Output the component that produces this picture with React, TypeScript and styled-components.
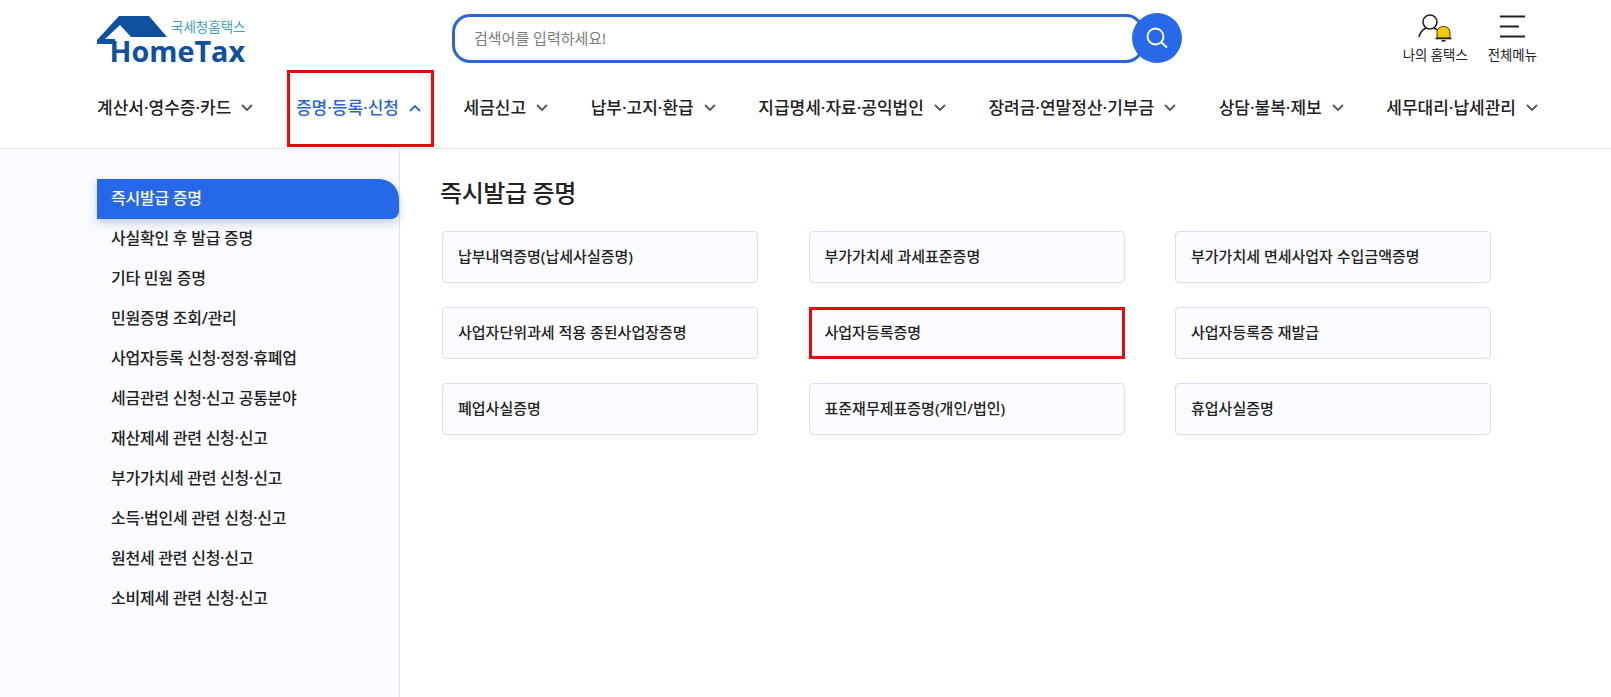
import styled, { createGlobalStyle } from 'styled-components'

const fontStack = `"Noto Sans", "Noto Sans CJK KR", sans-serif`

const GlobalStyle = createGlobalStyle`
  * { box-sizing: border-box; }
  html, body { margin: 0; padding: 0; background: #fff; }
  body {
    font-family: ${fontStack};
    color: #222;
  }
`

const Page = styled.div`
  width: 1611px;
  height: 697px;
  display: flex;
  flex-direction: column;
  overflow: hidden;
`

const Header = styled.header`
  height: 149px;
  border-bottom: 1px solid #e8e8e8;
  padding: 0 73px 0 97px;
  flex-shrink: 0;
`

const TopRow = styled.div`
  height: 70px;
  display: flex;
  align-items: flex-start;
`

const LogoBox = styled.a`
  width: 355px;
  padding-top: 16px;
  display: block;
  svg { display: block; overflow: visible; }
`

const SearchWrap = styled.div`
  width: 730px;
  margin-top: 13px;
  display: flex;
  align-items: center;
`

const SearchInput = styled.input`
  flex: 1;
  height: 49px;
  border: 3px solid #2a66d9;
  border-radius: 18px;
  padding: 0 20px 0 19px;
  font: 400 15px ${fontStack};
  color: #333;
  outline: none;
  &::placeholder { color: #7b7b7b; opacity: 1; }
`

const SearchButton = styled.button`
  width: 50px;
  height: 50px;
  margin-left: -12px;
  border: 0;
  border-radius: 50%;
  background: #2869e9;
  display: flex;
  align-items: center;
  justify-content: center;
  position: relative;
  padding: 0;
`

const Utils = styled.div`
  margin-left: auto;
  margin-right: 1px;
  padding-top: 12px;
  display: flex;
  gap: 20px;
`

const UtilItem = styled.a`
  display: flex;
  flex-direction: column;
  align-items: center;
  font-size: 13.4px;
  line-height: 18px;
  color: #222;
  svg { display: block; margin-bottom: 4px; }
`

const Nav = styled.nav`
  height: 78px;
  display: flex;
  justify-content: space-between;
  align-items: center;
`

const NavItem = styled.a<{ $active?: boolean }>`
  position: relative;
  display: flex;
  align-items: center;
  gap: 10px;
  font-size: 17px;
  font-weight: 500;
  line-height: 24px;
  height: 24px;
  margin-top: -2px;
  white-space: nowrap;
  color: ${p => (p.$active ? '#2a66d9' : '#222')};
  svg { color: ${p => (p.$active ? '#2a66d9' : '#555')}; }
`

const Highlight = styled.span<{ $top: number; $right: number; $bottom: number; $left: number }>`
  position: absolute;
  top: ${p => p.$top}px;
  right: ${p => p.$right}px;
  bottom: ${p => p.$bottom}px;
  left: ${p => p.$left}px;
  border: 3px solid #e30b0b;
  pointer-events: none;
`

const Body = styled.div`
  flex: 1;
  display: flex;
  min-height: 0;
`

const Sidebar = styled.aside`
  width: 400px;
  padding: 30px 0 0 97px;
  background: #f9fbff;
  border-right: 1px solid #d9e3f3;
  flex-shrink: 0;
`

const SideList = styled.ul`
  list-style: none;
  margin: 0;
  padding: 0;
`

const SideItem = styled.li<{ $active?: boolean }>`
  height: 40px;
  padding: 0 0 5px 14px;
  display: flex;
  align-items: center;
  font-size: 16px;
  font-weight: 500;
  letter-spacing: -0.25px;
  color: ${p => (p.$active ? '#fff' : '#222')};
  background: ${p => (p.$active ? '#2568e8' : 'transparent')};
  border-radius: ${p => (p.$active ? '0 20px 8px 0' : '0')};
  box-shadow: ${p => (p.$active ? '0 4px 8px rgba(40, 70, 130, 0.25)' : 'none')};
`

const Main = styled.main`
  flex: 1;
  padding: 28px 119px 0 42px;
`

const Title = styled.h2`
  margin: 0 0 22px -2px;
  font-size: 24px;
  font-weight: 500;
  line-height: 32px;
  letter-spacing: -0.4px;
  color: #222;
`

const CardGrid = styled.div`
  display: grid;
  grid-template-columns: repeat(3, 316px);
  column-gap: 50.5px;
  row-gap: 24px;
`

const Card = styled.a`
  position: relative;
  height: 52px;
  padding: 0 15px 4px;
  display: flex;
  align-items: center;
  background: #fbfcff;
  border: 1px solid #d5e0f2;
  border-radius: 4px;
  font-size: 15px;
  font-weight: 500;
  color: #222;
`

const navItems = [
  '계산서·영수증·카드',
  '증명·등록·신청',
  '세금신고',
  '납부·고지·환급',
  '지급명세·자료·공익법인',
  '장려금·연말정산·기부금',
  '상담·불복·제보',
  '세무대리·납세관리',
]

const sideItems = [
  '즉시발급 증명',
  '사실확인 후 발급 증명',
  '기타 민원 증명',
  '민원증명 조회/관리',
  '사업자등록 신청·정정·휴폐업',
  '세금관련 신청·신고 공통분야',
  '재산제세 관련 신청·신고',
  '부가가치세 관련 신청·신고',
  '소득·법인세 관련 신청·신고',
  '원천세 관련 신청·신고',
  '소비제세 관련 신청·신고',
]

const cards = [
  '납부내역증명(납세사실증명)',
  '부가가치세 과세표준증명',
  '부가가치세 면세사업자 수입금액증명',
  '사업자단위과세 적용 종된사업장증명',
  '사업자등록증명',
  '사업자등록증 재발급',
  '폐업사실증명',
  '표준재무제표증명(개인/법인)',
  '휴업사실증명',
]

function Logo() {
  return (
    <svg width="150" height="50" viewBox="0 0 150 50">
      <path d="M22 0 H52 L70 21 H34 L23 9 L8 23 H18 V28 H0 V24 Z" fill="#10519f" />
      <text x="74" y="16" fontFamily="'Noto Sans CJK KR', sans-serif" fontSize="13.5" fill="#3ea3bd">국세청홈택스</text>
      <text x="12.5" y="45.5" fontFamily="'Open Sans', sans-serif" fontWeight="700" fontSize="29" fill="#10519f" textLength="135.5" lengthAdjust="spacingAndGlyphs">HomeTax</text>
    </svg>
  )
}

function Chevron({ up }: { up?: boolean }) {
  return (
    <svg width="12" height="8" viewBox="0 0 12 8" fill="none">
      <path d={up ? 'M1 7 L6 2 L11 7' : 'M1 1 L6 6 L11 1'} stroke="currentColor" strokeWidth="1.8" />
    </svg>
  )
}

export default function App() {
  return (
    <Page>
      <GlobalStyle />
      <Header>
        <TopRow>
          <LogoBox><Logo /></LogoBox>
          <SearchWrap>
            <SearchInput placeholder="검색어를 입력하세요!" />
            <SearchButton aria-label="검색">
              <svg width="24" height="24" viewBox="0 0 24 24" fill="none" stroke="#fff" strokeWidth="1.9">
                <circle cx="10.5" cy="10.5" r="8" />
                <path d="M16.5 16.5 L22 21.5" />
              </svg>
            </SearchButton>
          </SearchWrap>
          <Utils>
            <UtilItem>
              <svg width="34" height="30" viewBox="0 0 34 30" fill="none">
                <circle cx="12" cy="10" r="7" stroke="#222" strokeWidth="1.6" />
                <path d="M1 25 C2 20 5 17.5 8 16 M16 16 C17 16.4 18 17 19 17.8" stroke="#222" strokeWidth="1.6" />
                <path d="M19 26 V21 C19 16.5 22 14.5 25.5 14.5 C29 14.5 32 16.5 32 21 V26 Z" fill="#f5c800" stroke="#222" strokeWidth="0.9" />
                <path d="M17.5 26.5 H33.5" stroke="#222" strokeWidth="1.6" />
                <path d="M23.5 28.8 H27.5" stroke="#222" strokeWidth="1.6" />
              </svg>
              나의 홈택스
            </UtilItem>
            <UtilItem>
              <svg width="25" height="30" viewBox="0 0 25 30" fill="none" stroke="#222" strokeWidth="1.8">
                <path d="M0 4.5 H25 M0 14.5 H19 M0 24.5 H25" />
              </svg>
              전체메뉴
            </UtilItem>
          </Utils>
        </TopRow>
        <Nav>
          {navItems.map((name, i) => (
            <NavItem key={name} $active={i === 1}>
              {name}
              <Chevron up={i === 1} />
              {i === 1 && <Highlight $top={-26} $right={-13} $bottom={-27} $left={-9} />}
            </NavItem>
          ))}
        </Nav>
      </Header>
      <Body>
        <Sidebar>
          <SideList>
            {sideItems.map((name, i) => (
              <SideItem key={name} $active={i === 0}>{name}</SideItem>
            ))}
          </SideList>
        </Sidebar>
        <Main>
          <Title>즉시발급 증명</Title>
          <CardGrid>
            {cards.map(name => (
              <Card key={name}>
                {name}
                {name === '사업자등록증명' && <Highlight $top={-1} $right={-1} $bottom={-1} $left={-1} />}
              </Card>
            ))}
          </CardGrid>
        </Main>
      </Body>
    </Page>
  )
}
